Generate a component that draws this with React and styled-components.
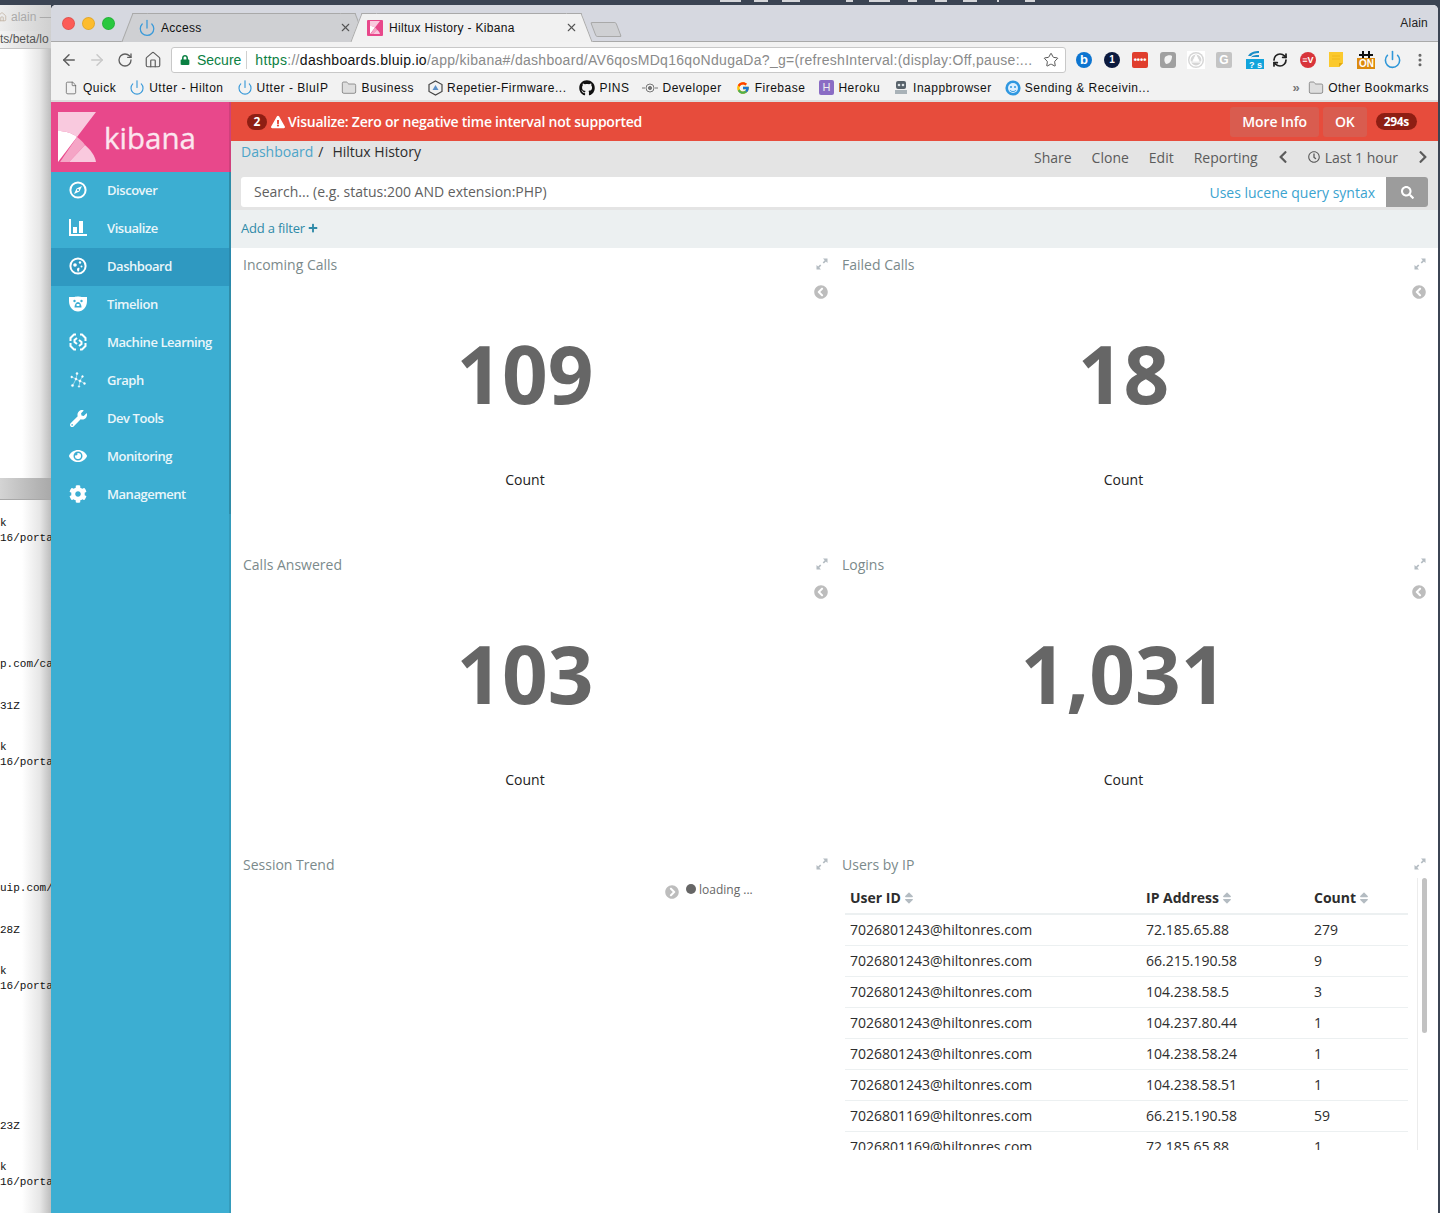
import React from 'react';
import styled, { createGlobalStyle } from 'styled-components';
import {
  ArrowLeft, ArrowRight, RotateCw, House, Star, File, Folder, Power, RefreshCw, X, EllipsisVertical,
} from 'lucide-react';
import {
  FaLock, FaGithub, FaWrench, FaEye, FaCog, FaChevronLeft, FaChevronRight, FaRegClock, FaSearch,
  FaSort, FaPlus, FaExclamationTriangle, FaChevronCircleLeft, FaChevronCircleRight,
} from 'react-icons/fa';
import { FcGoogle } from 'react-icons/fc';

const menuTicks = [
  { w: 21, ml: 0 }, { w: 14, ml: 13 }, { w: 18, ml: 14 }, { w: 7, ml: 46 }, { w: 21, ml: 16 },
  { w: 9, ml: 18 }, { w: 12, ml: 18 }, { w: 14, ml: 16 }, { w: 2, ml: 20 }, { w: 10, ml: 26 },
];

const logLines = [
  { text: 'k', gap: 16 },
  { text: '16/portal', gap: 1 },
  { text: 'p.com/call', gap: 112 },
  { text: '31Z', gap: 28 },
  { text: 'k', gap: 27 },
  { text: '16/portal', gap: 1 },
  { text: 'uip.com/', gap: 112 },
  { text: '28Z', gap: 28 },
  { text: 'k', gap: 27 },
  { text: '16/portal', gap: 1 },
  { text: '23Z', gap: 126 },
  { text: 'k', gap: 27 },
  { text: '16/portal', gap: 1 },
];

const rows = [
  ['7026801243@hiltonres.com', '72.185.65.88', '279'],
  ['7026801243@hiltonres.com', '66.215.190.58', '9'],
  ['7026801243@hiltonres.com', '104.238.58.5', '3'],
  ['7026801243@hiltonres.com', '104.237.80.44', '1'],
  ['7026801243@hiltonres.com', '104.238.58.24', '1'],
  ['7026801243@hiltonres.com', '104.238.58.51', '1'],
  ['7026801169@hiltonres.com', '66.215.190.58', '59'],
  ['7026801169@hiltonres.com', '72.185.65.88', '1'],
];

const Global = createGlobalStyle`
  html, body { margin: 0; padding: 0; background: #3b4453; }
  * { box-sizing: border-box; }
`;

const Screen = styled.div`
  width: 1440px;
  height: 1213px;
  overflow: hidden;
  display: flex;
  flex-direction: column;
  background: #3b4453;
  font-family: "Open Sans", sans-serif;
`;

const MenuBar = styled.div`
  height: 5px;
  flex: none;
  display: flex;
  padding-left: 720px;
`;

const MenuTick = styled.span`
  width: ${(p) => p.$w}px;
  height: 2px;
  background: #d5d6da;
  margin-left: ${(p) => p.$ml}px;
`;

const Desktop = styled.div`
  flex: 1;
  display: flex;
  min-height: 0;
`;

const Backdrop = styled.div`
  width: 51px;
  flex: none;
  overflow: hidden;
  display: flex;
  flex-direction: column;
  background: linear-gradient(90deg, #fff 0, #fff 22px, #e6e6e6 40px, #bdbdbd 51px);
`;

const BackTitle = styled.div`
  height: 26px;
  flex: none;
  display: flex;
  align-items: center;
  gap: 4px;
  padding-bottom: 3px;
  font: 12px "Liberation Sans", sans-serif;
  color: #aaa;
  white-space: nowrap;
  background: linear-gradient(90deg, #ededed, #d0d0d0);
`;

const BackHome = styled(House)`
  flex: none;
  margin-left: -3px;
  color: #c4b5a5;
`;

const BackAddress = styled.div`
  height: 18px;
  flex: none;
  font: 12px/16px "Liberation Sans", sans-serif;
  color: #555;
  white-space: nowrap;
  border-bottom: 1px solid #c4c4c4;
  background: linear-gradient(90deg, #f4f4f4, #cfcfcf);
`;

const BackBlank = styled.div`
  height: 429px;
  flex: none;
`;

const BackDivider = styled.div`
  height: 22px;
  flex: none;
  border-bottom: 1px solid #a8a8a8;
  background: linear-gradient(90deg, #d4d4d4, #a9a9a9);
`;

const LogLine = styled.div`
  margin-top: ${(p) => p.$gap}px;
  height: 14px;
  font: 11px/14px "Liberation Mono", monospace;
  color: #111;
  white-space: nowrap;
`;

const Browser = styled.div`
  width: 1387px;
  flex: none;
  display: flex;
  flex-direction: column;
  background: #fff;
  border-radius: 5px 5px 0 0;
  overflow: hidden;
`;

const TabStrip = styled.div`
  height: 37px;
  flex: none;
  display: flex;
  align-items: flex-end;
  padding-left: 11px;
  background: #d6d8e0;
  border-bottom: 1px solid #a9a9a9;
  font: 12px "Liberation Sans", sans-serif;
  letter-spacing: 0.3px;
  color: #111;
`;

const Lights = styled.div`
  display: flex;
  gap: 7px;
  align-self: flex-start;
  margin-top: 12px;
`;

const Light = styled.span`
  width: 13px;
  height: 13px;
  border-radius: 50%;
  background: ${(p) => p.$c};
  border: 1px solid rgba(0, 0, 0, 0.1);
`;

const Tab = styled.div`
  position: relative;
  width: ${(p) => p.$w}px;
  height: 29px;
  margin-left: ${(p) => p.$ml}px;
  margin-bottom: -1px;
  display: flex;
  align-items: center;
  gap: ${(p) => (p.$active ? 6 : 5)}px;
  padding: 0 2px 1px 4px;
  background: ${(p) => (p.$active ? '#f1f1f1' : '#cfd0d3')};
  border-top: 1px solid #a9a9a9;
  z-index: ${(p) => (p.$active ? 2 : 1)};
  &::before, &::after {
    content: '';
    position: absolute;
    top: -1px;
    bottom: 0;
    width: 14px;
    background: inherit;
    border-top: 1px solid #a9a9a9;
    z-index: -1;
  }
  &::before {
    left: -7px;
    transform: skewX(-21deg);
    border-left: 1px solid #a9a9a9;
  }
  &::after {
    right: -7px;
    transform: skewX(21deg);
    border-right: 1px solid #a9a9a9;
  }
`;

const TabClose = styled.span`
  margin-left: auto;
  display: flex;
  color: #555;
`;

const NewTab = styled.span`
  width: 26px;
  height: 15px;
  margin: 0 0 4px 13px;
  background: #cfd0d3;
  border: 1px solid #a9a9a9;
  border-radius: 2px;
  transform: skewX(21deg);
`;

const Profile = styled.span`
  margin-left: auto;
  align-self: flex-start;
  margin-top: 11px;
  padding-right: 10px;
  letter-spacing: 0.2px;
  color: #222;
`;

const Toolbar = styled.div`
  height: 33px;
  flex: none;
  display: flex;
  align-items: center;
  padding: 2px 0 0 4px;
  background: #f2f2f2;
`;

const NavBtn = styled.span`
  width: 28px;
  display: flex;
  justify-content: center;
  color: ${(p) => (p.$off ? '#c9c9c9' : '#5f5f5f')};
`;

const Omnibox = styled.div`
  width: 895px;
  height: 26px;
  margin-left: 4px;
  display: flex;
  align-items: center;
  padding: 0 6px 0 8px;
  background: #fff;
  border: 1px solid #c8c8c8;
  border-radius: 3px;
  font: 14px "Liberation Sans", sans-serif;
  white-space: nowrap;
  color: #111;
`;

const Secure = styled.span`
  display: flex;
  align-items: center;
  gap: 7px;
  color: #0b8043;
  padding-right: 5px;
  margin-right: 8px;
  border-right: 1px solid #d0d0d0;
  height: 18px;
`;

const Url = styled.span`
  flex: 1;
  overflow: hidden;
  letter-spacing: 0.3px;
  color: #8a8a8a;
`;

const UrlScheme = styled.span`
  color: #0b8043;
`;

const UrlHost = styled.span`
  color: #111;
`;

const Extensions = styled.div`
  margin-left: 4px;
  display: flex;
  align-items: center;
`;

const ExtSlot = styled.span`
  width: 28px;
  height: 24px;
  display: flex;
  align-items: center;
  justify-content: center;
  padding-left: ${(p) => p.$pad || 0}px;
`;

const ExtBadge = styled.span`
  width: 16px;
  height: 16px;
  flex: none;
  display: flex;
  align-items: center;
  justify-content: center;
  border-radius: ${(p) => p.$radius || 2}px;
  background: ${(p) => p.$bg};
  color: ${(p) => p.$fg || '#fff'};
  font: bold ${(p) => p.$size || 11}px "Liberation Sans", sans-serif;
  letter-spacing: ${(p) => p.$ls || 0}px;
`;

const Bookmarks = styled.div`
  height: 27px;
  flex: none;
  display: flex;
  align-items: center;
  padding: 0 9px 0 12px;
  gap: 13px;
  background: #f2f2f2;
  border-bottom: 2px solid #dcdcdc;
  font: 12px "Liberation Sans", sans-serif;
  letter-spacing: 0.5px;
  color: #111;
  white-space: nowrap;
`;

const Mark = styled.span`
  display: flex;
  align-items: center;
  gap: 4px;
  margin-left: ${(p) => (p.$push ? 'auto' : 0)};
`;

const MarkIcon = styled.span`
  width: 16px;
  height: 16px;
  display: flex;
  align-items: center;
  justify-content: center;
  color: ${(p) => p.$c || '#555'};
`;

const HerokuIcon = styled.span`
  width: 15px;
  height: 15px;
  border-radius: 2px;
  background: #8a6cc4;
  color: #eee;
  font: 11px/15px "Liberation Sans", sans-serif;
  text-align: center;
  letter-spacing: 0;
`;

const Chevrons = styled.span`
  color: #777;
  font-size: 13px;
  font-weight: bold;
  margin-right: 4px;
`;

const Page = styled.div`
  flex: 1;
  min-height: 0;
  display: flex;
`;

const Sidebar = styled.div`
  width: 180px;
  flex: none;
  background: #3caed2;
  box-shadow: inset -2px 0 0 rgba(0, 0, 0, 0.1);
`;

const Brand = styled.div`
  height: 70px;
  display: flex;
  align-items: flex-start;
  gap: 8px;
  padding: 10px 0 0 7px;
  background: #e8488b;
  box-shadow: inset -2px 0 0 rgba(0, 0, 0, 0.1);
`;

const BrandName = styled.span`
  font-size: 29.5px;
  line-height: 32px;
  margin-top: 10px;
  color: #fce6ef;
  -webkit-text-stroke: 0.3px #fce6ef;
`;

const NavRow = styled.div`
  height: 38px;
  display: flex;
  align-items: center;
  padding: 0 0 2px 18px;
  gap: 20px;
  font-size: 13px;
  font-weight: 600;
  letter-spacing: -0.45px;
  color: #eaf6fa;
  background: ${(p) => (p.$active ? '#2f99c1' : 'transparent')};
  box-shadow: inset -2px 0 0 rgba(0, 0, 0, 0.1);
`;

const NavIcon = styled.span`
  width: 18px;
  height: 18px;
  display: flex;
  align-items: center;
  justify-content: center;
  color: #fff;
`;

const Main = styled.div`
  flex: 1;
  min-width: 0;
  display: flex;
  flex-direction: column;
`;

const Alert = styled.div`
  height: 39px;
  flex: none;
  display: flex;
  align-items: center;
  padding: 0 21px 0 16px;
  background: #e74c3c;
  color: #fff;
  font-size: 14px;
  font-weight: 600;
`;

const Pill = styled.span`
  height: ${(p) => (p.$wide ? 17 : 16)}px;
  min-width: 20px;
  padding: 0 ${(p) => (p.$wide ? 8 : 0)}px;
  border-radius: 9px;
  display: flex;
  align-items: center;
  justify-content: center;
  background: #8e1e13;
  font-size: 12px;
  font-weight: 700;
  letter-spacing: ${(p) => (p.$wide ? -0.3 : 0)}px;
`;

const AlertText = styled.span`
  display: flex;
  align-items: center;
  gap: 3px;
  margin-left: 4px;
  letter-spacing: -0.24px;
`;

const AlertBtn = styled.span`
  height: 30px;
  padding: 0 12px;
  display: flex;
  align-items: center;
  border-radius: 3px;
  background: #d95c4f;
  letter-spacing: -0.15px;
  margin-right: ${(p) => p.$mr}px;
  margin-left: ${(p) => (p.$push ? 'auto' : 0)};
`;

const TopNav = styled.div`
  height: 69px;
  flex: none;
  display: flex;
  flex-direction: column;
  padding: 0 10px;
  background: #e4e4e4;
`;

const Crumbs = styled.div`
  height: 36px;
  flex: none;
  display: flex;
  justify-content: space-between;
  font-size: 14px;
  line-height: 19px;
`;

const Trail = styled.div`
  display: flex;
  gap: 7px;
  padding-top: 1px;
  color: #2d2d2d;
`;

const TrailLink = styled.span`
  color: #4da5c9;
`;

const TrailSep = styled.span`
  margin: 0 2px 0 -2px;
`;

const Actions = styled.div`
  display: flex;
  align-items: center;
  gap: 18px;
  margin-right: -2px;
  padding-bottom: 4px;
  color: #5b5b5b;
`;

const ActionLinks = styled.div`
  display: flex;
  gap: 20px;
`;

const TimeRange = styled.span`
  display: flex;
  align-items: center;
  gap: 5px;
`;

const SearchBar = styled.div`
  height: 30px;
  display: flex;
  align-items: center;
  padding-left: 13px;
  background: #fff;
  border-radius: 3px;
  overflow: hidden;
  font-size: 14px;
  color: #5f5f5f;
`;

const SearchHint = styled.span`
  margin-bottom: 2px;
`;

const SyntaxLink = styled.span`
  margin-left: auto;
  margin-right: 11px;
  color: #3ba3cf;
`;

const SearchBtn = styled.span`
  width: 42px;
  height: 100%;
  display: flex;
  align-items: center;
  justify-content: center;
  background: #9c9c9c;
  color: #fff;
`;

const FilterBar = styled.div`
  height: 38px;
  flex: none;
  display: flex;
  align-items: center;
  gap: 3px;
  padding: 0 0 2px 10px;
  background: #ecf0f1;
  font-size: 13px;
  letter-spacing: -0.2px;
  color: #2f8aa8;
`;

const Grid = styled.div`
  display: grid;
  grid-template-columns: 600px 607px;
  grid-auto-rows: 300px;
`;

const Panel = styled.div`
  display: flex;
  flex-direction: column;
  min-width: 0;
  padding: ${(p) => (p.$side === 'right' ? '0 12px 0 11px' : '0 3px 0 12px')};
`;

const PanelHead = styled.div`
  height: 34px;
  flex: none;
  display: flex;
  align-items: center;
  justify-content: space-between;
  padding-bottom: 2px;
  font-size: 14px;
  color: #7b8a8b;
`;

const Collapse = styled.div`
  height: 20px;
  flex: none;
  display: flex;
  justify-content: flex-end;
  align-items: center;
  color: #bdbdbd;
`;

const Metric = styled.div`
  flex: 1;
  display: flex;
  flex-direction: column;
  align-items: center;
  padding-right: 21px;
`;

const MetricValue = styled.div`
  margin-top: 16px;
  height: 110px;
  font-size: 80px;
  font-weight: 700;
  line-height: 110px;
  color: #666;
`;

const MetricLabel = styled.div`
  margin-top: 42px;
  font-size: 14px;
  line-height: 20px;
  color: #222;
`;

const Loading = styled.div`
  display: flex;
  align-items: center;
  margin: 0 0 0 422px;
  height: 20px;
  color: #bdbdbd;
  font-size: 12px;
`;

const LoadingDot = styled.span`
  width: 10px;
  height: 10px;
  margin: -6px 3px 0 7px;
  border-radius: 50%;
  background: #666;
`;

const LoadingText = styled.span`
  margin-top: -6px;
  color: #666;
`;

const TableArea = styled.div`
  height: 272px;
  margin: -4px -5px 0 0;
  display: flex;
`;

const TableClip = styled.div`
  width: 575px;
  flex: none;
  overflow: hidden;
  padding: 3px 0 0 3px;
`;

const Table = styled.table`
  width: 563px;
  border-collapse: collapse;
  table-layout: fixed;
  font-size: 14px;
  color: #2d2d2d;
`;

const Th = styled.th`
  height: 33px;
  padding: 0 0 0 5px;
  text-align: left;
  font-weight: 700;
  white-space: nowrap;
  border-bottom: 2px solid #ecf0f1;
  width: ${(p) => p.$w}px;
`;

const SortIcon = styled(FaSort)`
  color: #b4bcc2;
  margin-left: 1px;
  vertical-align: -2px;
`;

const Td = styled.td`
  height: 31px;
  padding: 0 0 0 5px;
  white-space: nowrap;
  border-bottom: 1px solid #ecf0f1;
`;

const ScrollTrack = styled.div`
  width: 13px;
  flex: none;
  padding: 0 3px 0 4px;
  border-left: 1px solid #ececec;
`;

const ScrollThumb = styled.div`
  height: 155px;
  border-radius: 4px;
  background: #c2c2c2;
`;

function KibanaMark({ size = 38 }) {
  return (
    <svg width={size} height={size * 50 / 38} viewBox="0 0 38 50">
      <path d="M0 0H38L19 25C14 21 7 19 0 19Z" fill="#f9c9de" />
      <path d="M0 19C7 19 14 21 19 25L0 50Z" fill="#fff" />
      <path d="M19 25C22 27 25 30 27 33L11 50H2Z" fill="#f5a5c6" />
      <path d="M27 33C33 38 37 44 38 50H11Z" fill="#f9c9de" />
    </svg>
  );
}

function KibanaFavicon() {
  return (
    <ExtBadge $bg="#e8488b" $radius={1}>
      <KibanaMark size={10} />
    </ExtBadge>
  );
}

function Expand() {
  return (
    <svg width="12" height="12" viewBox="0 0 12 12" fill="#b4bcc2">
      <path d="M7 0.5H11.5V5L9.9 3.4L7.9 5.4L6.7 4.6L8.7 2.2Z" />
      <path d="M5 11.5H0.5V7L2.1 8.6L4.1 6.6L5.3 7.4L3.3 9.8Z" />
    </svg>
  );
}

function CompassIcon() {
  return (
    <svg width="18" height="18" viewBox="0 0 18 18">
      <circle cx="9" cy="9" r="7.6" fill="none" stroke="#fff" strokeWidth="2" />
      <path d="M13 5L10.4 10.4L5 13L7.6 7.6Z" fill="#fff" />
      <circle cx="9" cy="9" r="1.1" fill="#3caed2" />
    </svg>
  );
}

function BarsIcon() {
  return (
    <svg width="18" height="18" viewBox="0 0 18 18" fill="#fff">
      <path d="M0 0H2V15H18V17H0Z" />
      <rect x="4" y="8" width="4" height="6" />
      <rect x="10" y="2" width="4" height="12" />
    </svg>
  );
}

function DashIcon() {
  return (
    <svg width="18" height="18" viewBox="0 0 18 18" fill="#fff">
      <circle cx="9" cy="9" r="7.6" fill="none" stroke="#fff" strokeWidth="2" />
      <circle cx="6" cy="8" r="1.8" />
      <circle cx="11" cy="5.5" r="1.2" />
      <circle cx="12.5" cy="9.5" r="1" />
      <path d="M8 12.5C8 11 9.5 10.5 10.5 11L10 14.5H8.5Z" />
    </svg>
  );
}

function BearIcon() {
  return (
    <svg width="18" height="16" viewBox="0 0 18 16">
      <path d="M0 1H5.5C7 .2 11 .2 12.5 1H18V5C18 11 14 15.5 9 15.5C4 15.5 0 11 0 5Z" fill="#fff" />
      <circle cx="5.5" cy="5" r="1.2" fill="#3caed2" />
      <circle cx="12.5" cy="5" r="1.2" fill="#3caed2" />
      <path d="M9 6C7 6 5.5 9 5.5 11.5H12.5C12.5 9 11 6 9 6Z" fill="#3caed2" />
      <rect x="7.6" y="8" width="2.8" height="2" fill="#fff" />
    </svg>
  );
}

function BrainIcon() {
  return (
    <svg width="18" height="18" viewBox="0 0 18 18" fill="none" stroke="#fff" strokeWidth="2">
      <path d="M7 1.5H5L1.5 5V8" />
      <path d="M11 1.5H13L16.5 5V8" />
      <path d="M1.5 10V13L5 16.5H7" />
      <path d="M16.5 10V13L13 16.5H11" />
      <path d="M8 5L5.5 7V9L8 11" />
      <path d="M10 7L12.5 9V11L10 13" />
    </svg>
  );
}

function GraphIcon() {
  return (
    <svg width="16" height="16" viewBox="0 0 16 16" fill="#fff" stroke="#fff" strokeWidth="0.5">
      <path d="M7 2L6 7M6 7L2 5M6 7L10 9M10 9L12 5M10 9L14 11M6 7L3 13M10 9L9 14" fill="none" />
      <circle cx="7" cy="1.5" r="1" />
      <circle cx="6" cy="7" r="1" />
      <circle cx="1.7" cy="5" r="0.9" />
      <circle cx="10" cy="9" r="1.1" />
      <circle cx="12.5" cy="4.5" r="0.9" />
      <circle cx="14.5" cy="11.5" r="1" />
      <circle cx="2.5" cy="13.5" r="1.1" />
      <circle cx="9" cy="14.5" r="0.8" />
    </svg>
  );
}

function RepetierIcon() {
  return (
    <svg width="15" height="16" viewBox="0 0 15 16" fill="none" stroke="#444" strokeWidth="1.2">
      <path d="M7.5 1L14 4.5V11.5L7.5 15L1 11.5V4.5Z" />
      <path d="M7.5 5L10.5 10H4.5Z" fill="#5b8fc7" stroke="none" />
    </svg>
  );
}

function DevIcon() {
  return (
    <svg width="16" height="16" viewBox="0 0 16 16" fill="none" stroke="#777">
      <circle cx="8" cy="8" r="4" />
      <circle cx="8" cy="8" r="1.6" fill="#777" />
      <path d="M0 8H3M13 8H16" />
    </svg>
  );
}

function RobotIcon() {
  return (
    <svg width="14" height="15" viewBox="0 0 14 15">
      <rect x="2" y="1" width="10" height="8" rx="2" fill="#59636b" />
      <circle cx="5" cy="5" r="1.3" fill="#dfe5e8" />
      <circle cx="9" cy="5" r="1.3" fill="#dfe5e8" />
      <rect x="1" y="10" width="12" height="4" fill="#a9b2b8" />
    </svg>
  );
}

function GlobeIcon() {
  return (
    <svg width="16" height="16" viewBox="0 0 16 16">
      <circle cx="8" cy="8" r="7.6" fill="#2f97e0" />
      <circle cx="8" cy="8" r="5" fill="#dcefff" />
      <circle cx="6" cy="7" r="1" fill="#2f97e0" />
      <circle cx="10" cy="7" r="1" fill="#2f97e0" />
      <path d="M5 10C6 12 10 12 11 10" fill="none" stroke="#2f97e0" />
    </svg>
  );
}

function BookmarkFolder() {
  return <Folder size={16} strokeWidth={1} color="#666" fill="#dedede" />;
}

function BlueBolt() {
  return <Power size={19} strokeWidth={1.7} color="#3a9ad9" />;
}

function QuestionExt() {
  return (
    <svg width="18" height="20" viewBox="0 0 18 20">
      <path d="M2 6C4 2 9 1 13 1V3C9 3 6 4 5 6ZM5 8C6 5 9 5 13 5V7H5Z" fill="#1b8ec7" />
      <rect x="0" y="9" width="18" height="10" fill="#12a4dc" />
      <text x="3" y="17.5" fontFamily="Liberation Sans" fontWeight="700" fontSize="9" fill="#fff">? s</text>
    </svg>
  );
}

function OnExt() {
  return (
    <svg width="20" height="20" viewBox="0 0 20 20">
      <path d="M3 5H17M7 1V9M13 1V9" stroke="#111" strokeWidth="2" />
      <rect x="1" y="8" width="18" height="11" fill="#dc8a0c" />
      <text x="3" y="17" fontFamily="Liberation Sans" fontWeight="700" fontSize="10" fill="#fff">ON</text>
    </svg>
  );
}

function NoteExt() {
  return (
    <svg width="16" height="17" viewBox="0 0 16 17">
      <path d="M1 1H15V12L11 16H1Z" fill="#fbc92d" />
      <path d="M11 16V12H15Z" fill="#e2a90f" />
      <path d="M4 5H12M4 8H12" stroke="#f0b71d" />
    </svg>
  );
}

function AdExt() {
  return (
    <svg width="18" height="18" viewBox="0 0 18 18">
      <rect width="18" height="18" fill="#fff" />
      <circle cx="9" cy="9" r="8" fill="#d6d6d6" />
      <circle cx="9" cy="9" r="6" fill="none" stroke="#fff" strokeWidth="1.2" />
      <path d="M9 4L12 10H6Z M4 11H14" fill="#fff" stroke="#fff" />
    </svg>
  );
}

function DotsExt() {
  return (
    <ExtBadge $bg="#e03e2d" $size={9}>••••</ExtBadge>
  );
}

function BlobExt() {
  return (
    <svg width="16" height="16" viewBox="0 0 16 16">
      <rect width="16" height="16" rx="3" fill="#a0a0a0" />
      <path d="M5 5C7 3 11 3 12 4C12 8 10 12 6 12C4 10 4 7 5 5Z" fill="#f3f3f3" />
    </svg>
  );
}

const navItems = [
  { label: 'Discover', icon: <CompassIcon /> },
  { label: 'Visualize', icon: <BarsIcon /> },
  { label: 'Dashboard', icon: <DashIcon />, active: true },
  { label: 'Timelion', icon: <BearIcon /> },
  { label: 'Machine Learning', icon: <BrainIcon /> },
  { label: 'Graph', icon: <GraphIcon /> },
  { label: 'Dev Tools', icon: <FaWrench size={17} /> },
  { label: 'Monitoring', icon: <FaEye size={18} /> },
  { label: 'Management', icon: <FaCog size={18} /> },
];

const bookmarks = [
  { label: 'Quick', icon: <File size={14} strokeWidth={1.2} /> },
  { label: 'Utter - Hilton', icon: <BlueBolt /> },
  { label: 'Utter - BluIP', icon: <BlueBolt /> },
  { label: 'Business', icon: <BookmarkFolder /> },
  { label: 'Repetier-Firmware...', icon: <RepetierIcon /> },
  { label: 'PINS', icon: <FaGithub size={16} color="#111" /> },
  { label: 'Developer', icon: <DevIcon /> },
  { label: 'Firebase', icon: <FcGoogle size={14} /> },
  { label: 'Heroku', icon: <HerokuIcon>H</HerokuIcon> },
  { label: 'Inappbrowser', icon: <RobotIcon /> },
  { label: 'Sending & Receivin...', icon: <GlobeIcon /> },
];

function MetricPanel({ side, title, value }) {
  return (
    <Panel $side={side}>
      <PanelHead>{title}<Expand /></PanelHead>
      <Collapse><FaChevronCircleLeft size={14} /></Collapse>
      <Metric>
        <MetricValue>{value}</MetricValue>
        <MetricLabel>Count</MetricLabel>
      </Metric>
    </Panel>
  );
}

export default function App() {
  return (
    <Screen>
      <Global />
      <MenuBar>
        {menuTicks.map((t, i) => <MenuTick key={i} $w={t.w} $ml={t.ml} />)}
      </MenuBar>
      <Desktop>
        <Backdrop>
          <BackTitle><BackHome size={10} />alain —</BackTitle>
          <BackAddress>ts/beta/lo</BackAddress>
          <BackBlank />
          <BackDivider />
          {logLines.map((line, i) => (
            <LogLine key={i} $gap={line.gap}>{line.text}</LogLine>
          ))}
        </Backdrop>
        <Browser>
          <TabStrip>
            <Lights>
              <Light $c="#fc5b57" />
              <Light $c="#fdbc2e" />
              <Light $c="#29c83f" />
            </Lights>
            <Tab $w={220} $ml={19}>
              <Power size={18} strokeWidth={1.7} color="#3a9ad9" />
              Access
              <TabClose><X size={13} strokeWidth={2} /></TabClose>
            </Tab>
            <Tab $w={217} $ml={9} $active>
              <KibanaFavicon />
              Hiltux History - Kibana
              <TabClose><X size={13} strokeWidth={2} /></TabClose>
            </Tab>
            <NewTab />
            <Profile>Alain</Profile>
          </TabStrip>
          <Toolbar>
            <NavBtn><ArrowLeft size={18} strokeWidth={2} /></NavBtn>
            <NavBtn $off><ArrowRight size={18} strokeWidth={2} /></NavBtn>
            <NavBtn><RotateCw size={16} strokeWidth={2} /></NavBtn>
            <NavBtn><House size={18} strokeWidth={1.6} /></NavBtn>
            <Omnibox>
              <Secure><FaLock size={10} />Secure</Secure>
              <Url>
                <UrlScheme>https</UrlScheme>://<UrlHost>dashboards.bluip.io</UrlHost>
                /app/kibana#/dashboard/AV6qosMDq16qoNdugaDa?_g=(refreshInterval:(display:Off,pause:...
              </Url>
              <Star size={16} strokeWidth={1.5} color="#555" />
            </Omnibox>
            <Extensions>
              <ExtSlot><ExtBadge $bg="#0d75d0" $radius={8} $size={13}>b</ExtBadge></ExtSlot>
              <ExtSlot><ExtBadge $bg="#0c1a3e" $radius={8} $size={10}>1</ExtBadge></ExtSlot>
              <ExtSlot><DotsExt /></ExtSlot>
              <ExtSlot><BlobExt /></ExtSlot>
              <ExtSlot><AdExt /></ExtSlot>
              <ExtSlot><ExtBadge $bg="#c4c4c4" $size={12}>G</ExtBadge></ExtSlot>
              <ExtSlot $pad={6}><QuestionExt /></ExtSlot>
              <ExtSlot><RefreshCw size={16} strokeWidth={2.6} color="#222" /></ExtSlot>
              <ExtSlot><ExtBadge $bg="#d8343a" $radius={8} $size={9}>≡V</ExtBadge></ExtSlot>
              <ExtSlot><NoteExt /></ExtSlot>
              <ExtSlot $pad={4}><OnExt /></ExtSlot>
              <ExtSlot><Power size={19} strokeWidth={2} color="#2f97d8" /></ExtSlot>
              <ExtSlot><EllipsisVertical size={16} strokeWidth={2.6} color="#666" /></ExtSlot>
            </Extensions>
          </Toolbar>
          <Bookmarks>
            {bookmarks.map((b) => (
              <Mark key={b.label}>
                <MarkIcon>{b.icon}</MarkIcon>
                {b.label}
              </Mark>
            ))}
            <Mark $push>
              <Chevrons>»</Chevrons>
              <MarkIcon><BookmarkFolder /></MarkIcon>
              Other Bookmarks
            </Mark>
          </Bookmarks>
          <Page>
            <Sidebar>
              <Brand>
                <KibanaMark />
                <BrandName>kibana</BrandName>
              </Brand>
              {navItems.map((item) => (
                <NavRow key={item.label} $active={item.active}>
                  <NavIcon>{item.icon}</NavIcon>
                  {item.label}
                </NavRow>
              ))}
            </Sidebar>
            <Main>
              <Alert>
                <Pill>2</Pill>
                <AlertText>
                  <FaExclamationTriangle size={14} />
                  Visualize: Zero or negative time interval not supported
                </AlertText>
                <AlertBtn $push $mr={4}>More Info</AlertBtn>
                <AlertBtn $mr={9}>OK</AlertBtn>
                <Pill $wide>294s</Pill>
              </Alert>
              <TopNav>
                <Crumbs>
                  <Trail>
                    <TrailLink>Dashboard</TrailLink>
                    <TrailSep>/</TrailSep>
                    <span>Hiltux History</span>
                  </Trail>
                  <Actions>
                    <ActionLinks>
                      <span>Share</span>
                      <span>Clone</span>
                      <span>Edit</span>
                      <span>Reporting</span>
                    </ActionLinks>
                    <FaChevronLeft size={14} />
                    <TimeRange><FaRegClock size={12} />Last 1 hour</TimeRange>
                    <FaChevronRight size={14} />
                  </Actions>
                </Crumbs>
                <SearchBar>
                  <SearchHint>Search... (e.g. status:200 AND extension:PHP)</SearchHint>
                  <SyntaxLink>Uses lucene query syntax</SyntaxLink>
                  <SearchBtn><FaSearch size={13} /></SearchBtn>
                </SearchBar>
              </TopNav>
              <FilterBar>Add a filter <FaPlus size={10} /></FilterBar>
              <Grid>
                <MetricPanel side="left" title="Incoming Calls" value="109" />
                <MetricPanel side="right" title="Failed Calls" value="18" />
                <MetricPanel side="left" title="Calls Answered" value="103" />
                <MetricPanel side="right" title="Logins" value="1,031" />
                <Panel $side="left">
                  <PanelHead>Session Trend<Expand /></PanelHead>
                  <Loading>
                    <FaChevronCircleRight size={14} />
                    <LoadingDot />
                    <LoadingText>loading ...</LoadingText>
                  </Loading>
                </Panel>
                <Panel $side="right">
                  <PanelHead>Users by IP<Expand /></PanelHead>
                  <TableArea>
                    <TableClip>
                      <Table>
                        <thead>
                          <tr>
                            <Th $w={296}>User ID<SortIcon size={14} /></Th>
                            <Th $w={168}>IP Address<SortIcon size={14} /></Th>
                            <Th>Count<SortIcon size={14} /></Th>
                          </tr>
                        </thead>
                        <tbody>
                          {rows.map((r, i) => (
                            <tr key={i}>
                              <Td>{r[0]}</Td>
                              <Td>{r[1]}</Td>
                              <Td>{r[2]}</Td>
                            </tr>
                          ))}
                        </tbody>
                      </Table>
                    </TableClip>
                    <ScrollTrack><ScrollThumb /></ScrollTrack>
                  </TableArea>
                </Panel>
              </Grid>
            </Main>
          </Page>
        </Browser>
      </Desktop>
    </Screen>
  );
}
